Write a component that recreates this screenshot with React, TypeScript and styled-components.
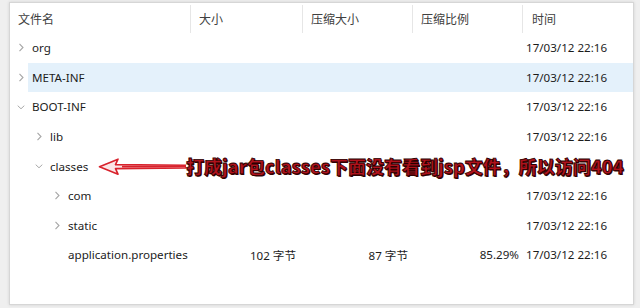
import React from "react";
import styled, { createGlobalStyle } from "styled-components";

const Global = createGlobalStyle`
  html, body { margin: 0; padding: 0; background: #efefef; }
  body { font-family: "Noto Sans", "Noto Sans CJK SC", sans-serif; }
`;

const Frame = styled.div`
  width: 640px;
  height: 308px;
  box-sizing: border-box;
  padding: 2px 6px 3px 9px;
  background: #efefef;
`;

const Panel = styled.div`
  height: 100%;
  box-sizing: border-box;
  background: #ffffff;
  border: 1px solid #d6d6d6;
  box-shadow: 0 0 3px rgba(0, 0, 0, 0.12);
  display: flex;
  flex-direction: column;
`;

const COLS = "180px 112px 110px 110px 1fr";

const Header = styled.div`
  display: grid;
  grid-template-columns: ${COLS};
  height: 30px;
  align-items: stretch;
`;

const HeadCell = styled.div<{ $first?: boolean; $pad?: number }>`
  display: flex;
  align-items: center;
  padding-left: ${(p) => p.$pad ?? 8}px;
  margin-top: 2px;
  padding-bottom: 2px;
  font-family: "Noto Sans CJK SC", sans-serif;
  font-size: 12px;
  color: #404040;
  border-left: ${(p) => (p.$first ? "none" : "1px solid #e6e6e6")};
`;

const Row = styled.div<{ $selected?: boolean }>`
  display: grid;
  grid-template-columns: ${COLS};
  height: 29.6px;
  align-items: center;
  font-size: 11.6px;
  color: #1c1c1c;
  position: relative;
  background: ${(p) =>
    p.$selected
      ? "linear-gradient(to right, transparent 18px, #e4f1fb 18px)"
      : "transparent"};
`;

const NameCell = styled.div<{ $level: number }>`
  display: flex;
  align-items: center;
  gap: 7px;
  padding-left: ${(p) => 7 + p.$level * 18}px;
  white-space: nowrap;
`;

const Chevron = styled.span`
  width: 8px;
  height: 8px;
  display: inline-flex;
  align-items: center;
  justify-content: center;
  flex: none;
`;

const NumCell = styled.div<{ $pr?: number }>`
  text-align: right;
  padding-right: ${(p) => p.$pr ?? 5}px;
  white-space: nowrap;
`;

const TimeCell = styled.div`
  padding-left: 4px;
  white-space: nowrap;
`;

const Annotation = styled.div`
  position: absolute;
  left: 88px;
  top: 50%;
  transform: translateY(-50%);
  display: flex;
  align-items: center;
  pointer-events: none;
`;

const Note = styled.span`
  font-family: "Noto Sans CJK SC", sans-serif;
  font-weight: 900;
  font-size: 18px;
  line-height: 1.15;
  color: #b0121c;
  background: #ffffff;
  -webkit-text-stroke: 0.8px #2a0000;
  text-shadow: 1px 1px 0 #3a0505;
  white-space: nowrap;
`;

type Item = {
  name: string;
  level: number;
  chevron?: "right" | "down";
  size?: string;
  packed?: string;
  ratio?: string;
  selected?: boolean;
  note?: boolean;
};

const items: Item[] = [
  { name: "org", level: 0, chevron: "right" },
  { name: "META-INF", level: 0, chevron: "right", selected: true },
  { name: "BOOT-INF", level: 0, chevron: "down" },
  { name: "lib", level: 1, chevron: "right" },
  { name: "classes", level: 1, chevron: "down", note: true },
  { name: "com", level: 2, chevron: "right" },
  { name: "static", level: 2, chevron: "right" },
  {
    name: "application.properties",
    level: 2,
    size: "102 字节",
    packed: "87 字节",
    ratio: "85.29%",
  },
];

function ChevronIcon({ dir }: { dir?: "right" | "down" }) {
  return (
    <Chevron>
      {dir === "right" && (
        <svg width="8" height="9" viewBox="0 0 8 9">
          <path d="M2.5 0.8 L6 4.5 L2.5 8.2" fill="none" stroke="#a6a6a6" strokeWidth="1.1" />
        </svg>
      )}
      {dir === "down" && (
        <svg width="9" height="8" viewBox="0 0 9 8">
          <path d="M0.8 2.5 L4.5 6 L8.2 2.5" fill="none" stroke="#a6a6a6" strokeWidth="1.1" />
        </svg>
      )}
    </Chevron>
  );
}

function Arrow() {
  return (
    <svg width="88" height="18" viewBox="0 0 88 18">
      <path
        d="M1.5 9 L20 1.5 L17.5 7 L88 7.6 L88 10.4 L17.5 11 L20 16.5 Z"
        fill="#fbe6e6"
        stroke="#d8222c"
        strokeWidth="1.6"
        strokeLinejoin="round"
      />
      <path d="M24 9 L88 9" stroke="#d8222c" strokeWidth="1.6" />
    </svg>
  );
}

export default function App() {
  return (
    <>
      <Global />
      <Frame>
        <Panel>
          <Header>
            <HeadCell $first>文件名</HeadCell>
            <HeadCell>大小</HeadCell>
            <HeadCell>压缩大小</HeadCell>
            <HeadCell>压缩比例</HeadCell>
            <HeadCell $pad={9}>时间</HeadCell>
          </Header>
          {items.map((it) => (
            <Row key={it.name} $selected={it.selected}>
              <NameCell $level={it.level}>
                {it.chevron && <ChevronIcon dir={it.chevron} />}
                {!it.chevron && <Chevron />}
                <span>{it.name}</span>
              </NameCell>
              <NumCell $pr={6}>{it.size}</NumCell>
              <NumCell $pr={4}>{it.packed}</NumCell>
              <NumCell $pr={3}>{it.ratio}</NumCell>
              <TimeCell>{it.note ? "" : "17/03/12 22:16"}</TimeCell>
              {it.note && (
                <Annotation>
                  <Arrow />
                  <Note>打成jar包classes下面没有看到jsp文件，所以访问404</Note>
                </Annotation>
              )}
            </Row>
          ))}
        </Panel>
      </Frame>
    </>
  );
}
